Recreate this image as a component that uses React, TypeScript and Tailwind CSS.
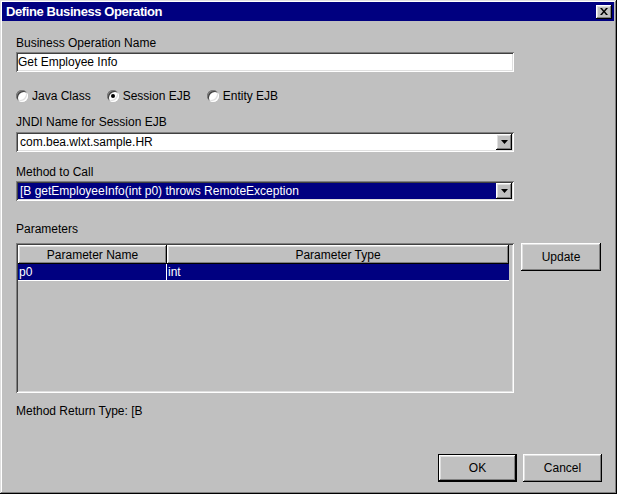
import React from "react";

const raised =
  "shadow-[inset_-1px_-1px_#000,inset_1px_1px_#fff,inset_-2px_-2px_#808080,inset_2px_2px_#dfdfdf]";
const sunken =
  "shadow-[inset_1px_1px_#808080,inset_-1px_-1px_#fff,inset_2px_2px_#404040,inset_-2px_-2px_#dfdfdf]";

function Radio({ label, checked }: { label: string; checked?: boolean }) {
  return (
    <div className="flex items-center gap-[4px]">
      <span className="relative flex h-[12px] w-[12px] items-center justify-center rounded-full bg-white shadow-[inset_1px_1px_#808080,inset_-1px_-1px_#fff,inset_2px_2px_#404040,inset_-2px_-2px_#dfdfdf]">
        {checked && <span className="h-[4px] w-[4px] rounded-full bg-black" />}
      </span>
      <span>{label}</span>
    </div>
  );
}

function Arrow() {
  return (
    <div className={`flex h-[16px] w-[16px] items-center justify-center bg-[#c0c0c0] ${raised}`}>
      <svg width="7" height="4" viewBox="0 0 7 4">
        <path d="M0 0h7L3.5 4z" fill="#000" />
      </svg>
    </div>
  );
}

function Combo({ value, selected }: { value: string; selected?: boolean }) {
  return (
    <div className={`flex h-[20px] w-[498px] items-center bg-white p-[2px] ${sunken}`}>
      <div
        className={`flex h-full flex-1 items-center px-[2px] ${selected ? "bg-[#000080] text-white" : ""}`}
      >
        {value}
      </div>
      <Arrow />
    </div>
  );
}

function Button({ label, def, w }: { label: string; def?: boolean; w: string }) {
  return (
    <div className={`flex h-[28px] items-center justify-center ${w} ${def ? "border border-black" : ""}`}>
      <div className={`flex h-full w-full items-center justify-center bg-[#c0c0c0] ${raised}`}>
        {label}
      </div>
    </div>
  );
}

export default function App() {
  return (
    <div
      className="flex h-[494px] w-[617px] flex-col bg-[#c0c0c0] pt-[2px] pl-[2px] pr-[3px] pb-[3px] text-[12px] leading-[14px] text-black shadow-[inset_-1px_-1px_#000,inset_1px_1px_#dfdfdf,inset_-2px_-2px_#808080,inset_2px_2px_#fff]"
      style={{ fontFamily: '"Liberation Sans", Arial, sans-serif' }}
    >
      <div className="flex h-[19px] items-center justify-between bg-[#000080] pl-[4px] pr-[2px]">
        <span className="text-[13px] font-bold tracking-[-0.4px] text-white">Define Business Operation</span>
        <div className={`flex h-[14px] w-[16px] items-center justify-center bg-[#c0c0c0] ${raised}`}>
          <svg width="8" height="7" viewBox="0 0 8 7">
            <path d="M0 0h2l2 2.5L6 0h2L5 3.5 8 7H6L4 4.5 2 7H0l3-3.5z" fill="#000" />
          </svg>
        </div>
      </div>

      <div className="flex flex-1 flex-col pl-[14px]">
        <div className="mt-[15px]">Business Operation Name</div>
        <div className={`mt-[2px] flex h-[20px] w-[498px] items-center bg-white px-[2px] ${sunken}`}>
          Get Employee Info
        </div>

        <div className="mt-[14px] flex h-[20px] items-center gap-[16px]">
          <Radio label="Java Class" />
          <Radio label="Session EJB" checked />
          <Radio label="Entity EJB" />
        </div>

        <div className="mt-[9px]">JNDI Name for Session EJB</div>
        <div className="mt-[3px]">
          <Combo value="com.bea.wlxt.sample.HR" />
        </div>

        <div className="mt-[13px]">Method to Call</div>
        <div className="mt-[2px]">
          <Combo value="[B getEmployeeInfo(int p0) throws RemoteException" selected />
        </div>

        <div className="mt-[21px]">Parameters</div>
        <div className="mt-[7px] flex items-start gap-[7px]">
          <div className={`h-[150px] w-[498px] p-[2px] ${sunken}`}>
            <div className="flex h-[19px] w-[491px]">
              <div className={`flex w-[149px] items-center justify-center ${raised}`}>Parameter Name</div>
              <div className={`flex flex-1 items-center justify-center ${raised}`}>Parameter Type</div>
            </div>
            <div className="flex h-[17px] w-[491px] border-b border-white bg-[#000080] text-white">
              <div className="flex w-[149px] items-center border-r border-white px-[1px]">p0</div>
              <div className="flex flex-1 items-center px-[1px]">int</div>
            </div>
          </div>
          <Button label="Update" w="w-[80px]" />
        </div>

        <div className="mt-[11px]">Method Return Type: [B</div>

        <div className="mt-auto mb-[9px] flex justify-end gap-[6px] pr-[12px]">
          <Button label="OK" def w="w-[79px]" />
          <Button label="Cancel" w="w-[79px]" />
        </div>
      </div>
    </div>
  );
}
